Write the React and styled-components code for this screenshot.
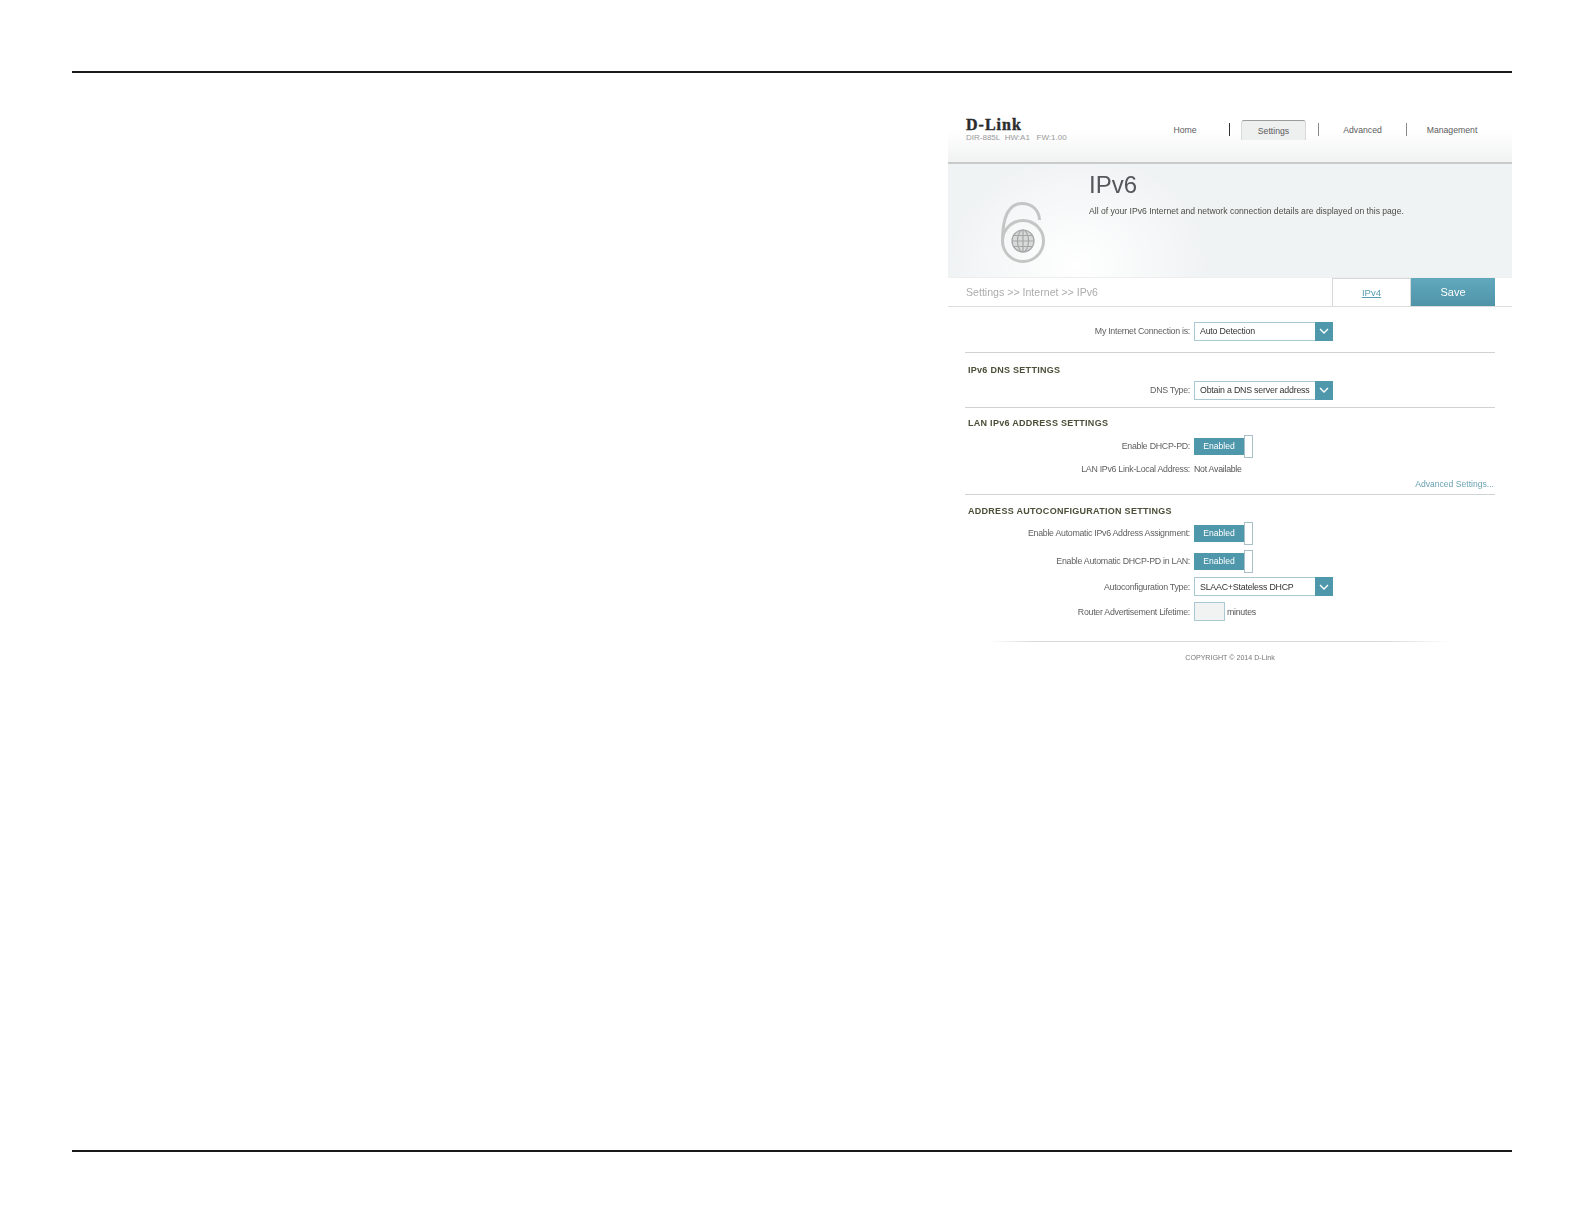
import styled, { createGlobalStyle } from "styled-components";

const Global = createGlobalStyle`
  html, body {
    margin: 0;
    background: #ffffff;
  }
  body {
    font-family: "Liberation Sans", Arial, sans-serif;
  }
`;

function LockIcon() {
  return (
    <svg width="50" height="66" viewBox="0 0 50 66" fill="none">
      <circle cx="24" cy="41" r="20.5" stroke="#c4c6c6" strokeWidth="3" />
      <path
        d="M3.5 41C3.5 24 6 3.5 23 3.5C33 3.5 40 10 40.5 20"
        stroke="#c4c6c6"
        strokeWidth="3"
      />
      <circle cx="24" cy="41" r="11" fill="#d8dada" stroke="#a5a7a7" strokeWidth="1.2" />
      <g stroke="#a5a7a7" strokeWidth="1.2">
        <path d="M13 41H35M14.5 35.5H33.5M14.5 46.5H33.5" />
        <path d="M24 30V52" />
        <ellipse cx="24" cy="41" rx="5.5" ry="11" />
      </g>
    </svg>
  );
}

function Chevron() {
  return (
    <svg width="10" height="6" viewBox="0 0 10 6" fill="none">
      <path d="M1 1L5 5L9 1" stroke="#ffffff" strokeWidth="1.4" />
    </svg>
  );
}

function Select({ value }) {
  return (
    <SelectBox>
      <span>{value}</span>
      <Arrow>
        <Chevron />
      </Arrow>
    </SelectBox>
  );
}

function Toggle() {
  return (
    <ToggleWrap>
      <ToggleOn>Enabled</ToggleOn>
      <Knob />
    </ToggleWrap>
  );
}

function App() {
  return (
    <Page>
      <Global />
      <Rule />
      <Panel>
        <Header>
          <Brand>
            <Logo>D-Link</Logo>
            <Model>DIR-885L&nbsp; HW:A1 &nbsp; FW:1.00</Model>
          </Brand>
          <Nav>
            <NavItem $w={88}>Home</NavItem>
            <NavSep $dark />
            <Tab>Settings</Tab>
            <NavSep />
            <NavItem $w={87}>Advanced</NavItem>
            <NavSep />
            <NavItem $w={90}>Management</NavItem>
          </Nav>
        </Header>
        <Banner>
          <IconSlot>
            <LockIcon />
          </IconSlot>
          <div>
            <Title>IPv6</Title>
            <Desc>
              All of your IPv6 Internet and network connection details are
              displayed on this page.
            </Desc>
          </div>
        </Banner>
        <SubBar>
          <Crumb>Settings &gt;&gt; Internet &gt;&gt; IPv6</Crumb>
          <LinkTab>
            <a>IPv4</a>
          </LinkTab>
          <Save>Save</Save>
        </SubBar>
        <Content>
          <Row $h={42}>
            <Label>My Internet Connection is:</Label>
            <Select value="Auto Detection" />
          </Row>
          <Section $pt={10} $h={44}>
            <Heading>IPv6 DNS SETTINGS</Heading>
            <Row $h={26}>
              <Label>DNS Type:</Label>
              <Select value="Obtain a DNS server address" />
            </Row>
          </Section>
          <Section $pt={8} $h={78}>
            <Heading>LAN IPv6 ADDRESS SETTINGS</Heading>
            <Row $h={32}>
              <Label>Enable DHCP-PD:</Label>
              <Toggle />
            </Row>
            <Row $h={14}>
              <Label>LAN IPv6 Link-Local Address:</Label>
              <Value>Not Available</Value>
            </Row>
            <MoreLink>Advanced Settings...</MoreLink>
          </Section>
          <Section $pt={9} $h={121}>
            <Heading>ADDRESS AUTOCONFIGURATION SETTINGS</Heading>
            <Row $h={30}>
              <Label>Enable Automatic IPv6 Address Assignment:</Label>
              <Toggle />
            </Row>
            <Row $h={26}>
              <Label>Enable Automatic DHCP-PD in LAN:</Label>
              <Toggle />
            </Row>
            <Row $h={25}>
              <Label>Autoconfiguration Type:</Label>
              <Select value="SLAAC+Stateless DHCP" />
            </Row>
            <Row $h={25}>
              <Label>Router Advertisement Lifetime:</Label>
              <NumberBox />
              <Unit>minutes</Unit>
            </Row>
          </Section>
        </Content>
        <FootLine />
        <Copyright>COPYRIGHT © 2014 D-Link</Copyright>
      </Panel>
      <Spacer />
      <Rule />
    </Page>
  );
}

const Page = styled.div`
  width: 1584px;
  height: 1224px;
  box-sizing: border-box;
  padding: 71px 72px 0 72px;
  display: flex;
  flex-direction: column;
`;

const Rule = styled.div`
  height: 2px;
  background: #1a1a1a;
  flex: none;
`;

const Spacer = styled.div`
  flex: 1;
  max-height: 445px;
`;

const Panel = styled.div`
  width: 564px;
  height: 596px;
  margin: 36px 0 0 auto;
  flex: none;
  color: #555;
  filter: blur(0.35px);
`;

const Header = styled.div`
  height: 53px;
  display: flex;
  justify-content: space-between;
  padding-left: 18px;
  border-bottom: 2px solid #c9cbcb;
  background: linear-gradient(#ffffff 0, #ffffff 22px, #f1f2f2 100%);
`;

const Brand = styled.div`
  padding-top: 9px;
`;

const Logo = styled.div`
  font-family: "Liberation Serif", serif;
  font-weight: bold;
  font-size: 16px;
  line-height: 14px;
  color: #2b2b2b;
  letter-spacing: 1px;
  -webkit-text-stroke: 0.4px #2b2b2b;
`;

const Model = styled.div`
  font-size: 8px;
  line-height: 11px;
  color: #9a9a9a;
  margin-top: 0;
  white-space: nowrap;
`;

const Nav = styled.div`
  display: flex;
  align-items: flex-start;
  padding-top: 11px;
  padding-right: 15px;
`;

const NavItem = styled.div`
  width: ${(p) => p.$w}px;
  text-align: center;
  font-size: 8.7px;
  line-height: 21px;
  color: #5c5c5c;
`;

const NavSep = styled.div`
  width: 1px;
  height: 13px;
  margin-top: 3px;
  background: ${(p) => (p.$dark ? "#333" : "#888")};
`;

const Tab = styled.div`
  width: 63px;
  height: 19px;
  margin: 0 12px 0 11px;
  text-align: center;
  font-size: 8.7px;
  line-height: 21px;
  color: #5c5c5c;
  background: #eeefef;
  border: 1px solid #d8d9d9;
  border-bottom: none;
  border-top-color: #9b9d9d;
  border-radius: 3px 3px 0 0;
`;

const Banner = styled.div`
  height: 113px;
  display: flex;
  background:
    radial-gradient(ellipse 130px 110px at 130px 100px, #ffffff 0, rgba(255,255,255,0) 100%),
    #f0f3f4;
`;

const IconSlot = styled.div`
  width: 141px;
  padding: 36px 0 0 51px;
  box-sizing: border-box;
`;

const Title = styled.h1`
  margin: 6px 0 0;
  font-size: 24px;
  font-weight: normal;
  line-height: 30px;
  color: #55585a;
`;

const Desc = styled.p`
  margin: 5px 0 0;
  font-size: 8.6px;
  line-height: 12px;
  color: #4b4d45;
`;

const SubBar = styled.div`
  height: 28px;
  display: flex;
  align-items: stretch;
  padding: 0 17px 0 18px;
  border-top: 1px solid #eeeeee;
  border-bottom: 1px solid #dddddd;
`;

const Crumb = styled.div`
  flex: 1;
  font-size: 10.6px;
  line-height: 28px;
  color: #adadad;
`;

const LinkTab = styled.div`
  width: 77px;
  border: 1px solid #d5d8d8;
  border-bottom: none;
  text-align: center;
  font-size: 9.6px;
  line-height: 27px;
  a {
    color: #5a9db0;
    text-decoration: underline;
  }
`;

const Save = styled.div`
  width: 84px;
  text-align: center;
  font-size: 11px;
  line-height: 28px;
  color: #ffffff;
  background: linear-gradient(#62a9bd, #4f93a7);
`;

const Content = styled.div`
  padding: 3px 17px 0 17px;
`;

const Section = styled.div`
  min-height: ${(p) => p.$h}px;
  padding-top: ${(p) => p.$pt}px;
  border-top: 1px solid #d0d3d3;
  position: relative;
`;

const Heading = styled.h2`
  margin: 0 0 0 3px;
  font-size: 9px;
  font-weight: bold;
  line-height: 14px;
  letter-spacing: 0.28px;
  color: #4c4e38;
`;

const Row = styled.div`
  display: flex;
  align-items: center;
  height: ${(p) => p.$h}px;
`;

const Label = styled.div`
  width: 225px;
  margin-right: 4px;
  text-align: right;
  font-size: 8.8px;
  letter-spacing: -0.27px;
  color: #5f5f5f;
  white-space: nowrap;
`;

const Value = styled.div`
  font-size: 8.8px;
  letter-spacing: -0.27px;
  color: #555;
`;

const SelectBox = styled.div`
  width: 139px;
  height: 19px;
  box-sizing: border-box;
  display: flex;
  align-items: center;
  justify-content: space-between;
  border: 1px solid #a9c9d2;
  padding-left: 5px;
  font-size: 8.8px;
  letter-spacing: -0.2px;
  color: #333;
`;

const Arrow = styled.div`
  width: 18px;
  height: 19px;
  margin-right: -1px;
  display: flex;
  align-items: center;
  justify-content: center;
  background: #4f97ab;
`;

const ToggleWrap = styled.div`
  display: flex;
  align-items: center;
`;

const ToggleOn = styled.div`
  width: 50px;
  height: 17px;
  text-align: center;
  font-size: 8.6px;
  line-height: 17px;
  color: #ffffff;
  background: #4f97ab;
`;

const Knob = styled.div`
  width: 9px;
  height: 23px;
  box-sizing: border-box;
  border: 1px solid #a9c0c8;
  background: #fff;
`;

const MoreLink = styled.div`
  position: absolute;
  right: 1px;
  top: 71px;
  font-size: 8.6px;
  color: #6ba3b3;
`;

const NumberBox = styled.div`
  width: 31px;
  height: 19px;
  box-sizing: border-box;
  background: #f1f3f3;
  border: 1px solid #a9c9d2;
`;

const Unit = styled.div`
  margin-left: 2px;
  font-size: 8.8px;
  letter-spacing: -0.27px;
  color: #555;
`;

const FootLine = styled.div`
  height: 1px;
  margin: 16px 60px 0 40px;
  background: linear-gradient(90deg, #ffffff, #d8d8d8 10%, #d8d8d8 85%, #ffffff);
`;

const Copyright = styled.div`
  text-align: center;
  margin-top: 12px;
  font-size: 7.1px;
  color: #777;
`;

export default App;
